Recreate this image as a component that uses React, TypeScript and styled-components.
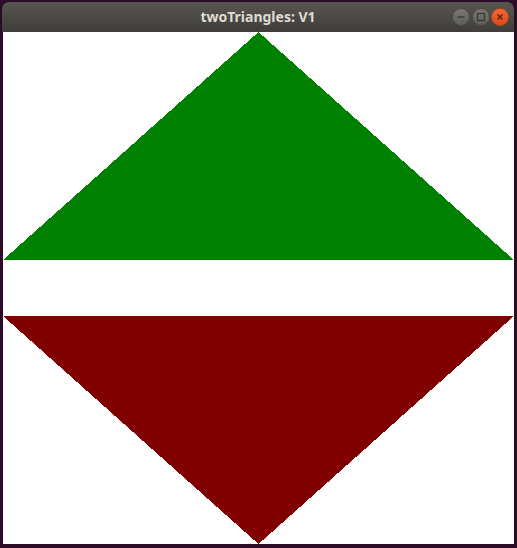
import React from "react";
import styled, { createGlobalStyle } from "styled-components";

const Global = createGlobalStyle`
  html, body { margin: 0; padding: 0; background: #2c0b26; }
  body { width: 517px; height: 548px; overflow: hidden; }
`;

const Desktop = styled.div`
  width: 517px;
  height: 548px;
  padding: 2px 0 0 2px;
  box-sizing: border-box;
  background: #2c0b26;
`;

const Window = styled.div`
  width: 512px;
  display: flex;
  flex-direction: column;
`;

const TitleBar = styled.div`
  position: relative;
  height: 30px;
  border-radius: 7px 7px 0 0;
  background: linear-gradient(#575651, #3e3d39);
  display: flex;
  align-items: center;
  justify-content: center;
  font-family: "Noto Sans", "DejaVu Sans", sans-serif;
  font-weight: 700;
  font-size: 14px;
  color: #dfdbd2;
`;

const Title = styled.span`
  margin-top: -1px;
`;

const Controls = styled.div`
  position: absolute;
  right: 5px;
  top: 6px;
  display: flex;
  gap: 1.5px;
`;

const Btn = styled.div<{ $close?: boolean }>`
  width: 18px;
  height: 18px;
  flex: none;
  border-radius: 50%;
  box-sizing: border-box;
  display: flex;
  align-items: center;
  justify-content: center;
  background: ${(p) =>
    p.$close
      ? "linear-gradient(#f0693a, #df4a16)"
      : "linear-gradient(#7a7974, #5e5d59)"};
  border: 1px solid ${(p) => (p.$close ? "#b8451d" : "#4a4945")};
`;

const Content = styled.div`
  height: 512px;
  border-left: 1px solid #2c0b26;
  background: #ffffff;
  display: flex;
`;

const Canvas = styled.svg`
  display: block;
  width: 511px;
  height: 512px;
`;

export default function App() {
  return (
    <>
      <Global />
      <Desktop>
        <Window>
          <TitleBar>
            <Title>twoTriangles: V1</Title>
            <Controls>
              <Btn>
                <svg width="10" height="10" viewBox="0 0 10 10">
                  <line x1="1.5" y1="5" x2="8.5" y2="5" stroke="#3a3935" strokeWidth="1.4" />
                </svg>
              </Btn>
              <Btn>
                <svg width="10" height="10" viewBox="0 0 10 10">
                  <rect x="1.5" y="1.5" width="7" height="7" fill="none" stroke="#3a3935" strokeWidth="1.3" />
                </svg>
              </Btn>
              <Btn $close>
                <svg width="10" height="10" viewBox="0 0 10 10">
                  <path d="M2.5 2.5 L7.5 7.5 M7.5 2.5 L2.5 7.5" stroke="#5a1c08" strokeWidth="1.4" />
                </svg>
              </Btn>
            </Controls>
          </TitleBar>
          <Content>
            <Canvas viewBox="0 0 511 512" shapeRendering="crispEdges">
              <polygon points="0,228 511,228 255.5,0" fill="#008000" />
              <polygon points="0,284 511,284 255.5,512" fill="#800000" />
            </Canvas>
          </Content>
        </Window>
      </Desktop>
    </>
  );
}
